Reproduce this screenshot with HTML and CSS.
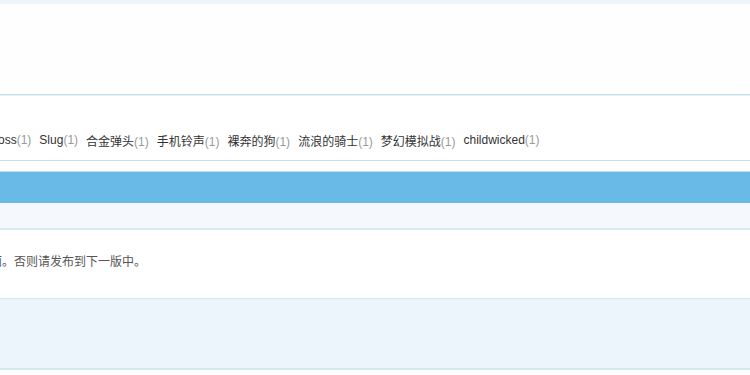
FILE: index.html
```html
<!DOCTYPE html>
<html lang="zh-CN">
<head>
    <meta charset="UTF-8">
    <title>论坛</title>
    <link rel="stylesheet" href="styles.css">
</head>
<body>
    <div class="topbar"></div>
    <div class="header"></div>

    <div class="tags">
        <a class="tag first">Boss<span class="num">(1)</span></a>
        <a class="tag">Slug<span class="num">(1)</span></a>
        <a class="tag">合金弹头<span class="num">(1)</span></a>
        <a class="tag">手机铃声<span class="num">(1)</span></a>
        <a class="tag">裸奔的狗<span class="num">(1)</span></a>
        <a class="tag">流浪的骑士<span class="num">(1)</span></a>
        <a class="tag">梦幻模拟战<span class="num">(1)</span></a>
        <a class="tag">childwicked<span class="num">(1)</span></a>
    </div>

    <div class="spacer"></div>

    <div class="box">
        <div class="box-title"></div>
        <div class="box-sub"></div>
        <div class="box-body">
            <p class="notice">面。否则请发布到下一版中。</p>
        </div>
        <div class="box-foot"></div>
    </div>
</body>
</html>
```

FILE: styles.css
```css
body {
    margin: 0;
    font-family: "Liberation Sans", Arial, "Noto Sans CJK SC", sans-serif;
    font-size: 12px;
    background-color: #ffffff;
    overflow: hidden;
}

.topbar {
    height: 4px;
    background-color: #eef6fc;
}

.header {
    height: 90px;
    background-color: #fefefe;
    border-bottom: 1px solid #c4dfee;
}

.tags {
    display: flex;
    align-items: center;
    height: 66px;
    box-sizing: border-box;
    padding-top: 24px;
    border-top: 1px solid #e6f1f7;
    border-bottom: 1px solid #c4dfee;
    white-space: nowrap;
}

.tag {
    color: #333;
    margin-right: 8px;
    text-decoration: none;
}

.tag.first {
    margin-left: -10px;
}

.num {
    color: #9a9a9a;
}

.spacer {
    height: 10px;
}

.box {
    border-top: 1px solid #c4dfee;
}

.box-title {
    height: 31px;
    background-color: #6abae8;
}

.box-sub {
    height: 25px;
    background-color: #f5f9fe;
    border-bottom: 2px solid #d7eaf3;
}

.box-body {
    height: 69px;
    box-sizing: border-box;
    padding-bottom: 8px;
    display: flex;
    align-items: center;
    border-bottom: 1px solid #d2e8f1;
}

.notice {
    margin: 0 0 0 -10px;
    color: #555;
}

.box-foot {
    height: 69px;
    background-color: #edf5fc;
    border-bottom: 2px solid #d2e8f1;
}
```
